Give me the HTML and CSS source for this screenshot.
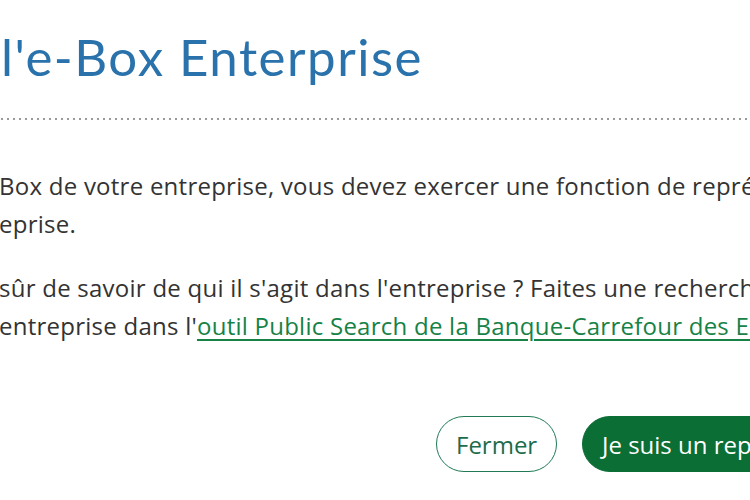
FILE: index.html
```html
<!DOCTYPE html>
<html lang="fr">
<head>
<meta charset="utf-8">
<title>l'e-Box Enterprise</title>
<link rel="stylesheet" href="styles.css">
</head>
<body>
<div class="modal">
  <header class="modal-header">
    <h1 class="modal-title">l'e-Box Enterprise</h1>
  </header>
  <div class="modal-body">
    <p class="para"><span class="line">Box de votre entreprise, vous devez exercer une fonction de représentation</span><span class="line">eprise.</span></p>
    <p class="para"><span class="line">sûr de savoir de qui il s'agit dans l'entreprise ? Faites une recherche</span><span class="line">entreprise dans l'<a class="link" href="#">outil Public Search de la Banque-Carrefour des Entreprises</a></span></p>
  </div>
  <footer class="modal-footer">
    <button class="btn btn-outline">Fermer</button>
    <button class="btn btn-primary">Je suis un représentant</button>
  </footer>
</div>
</body>
</html>
```
FILE: styles.css
```css
html, body {
  margin: 0;
  padding: 0;
  background: #ffffff;
  overflow: hidden;
}
body {
  width: 750px;
  height: 500px;
}
.modal {
  width: 900px;
  margin-left: -1px;
  font-family: "Open Sans", "Liberation Sans", sans-serif;
  color: #333333;
}
.modal-header {
  padding-top: 27px;
  height: 121px;
  box-sizing: border-box;
  background-image: linear-gradient(to right, #9a9a9a 1.6px, transparent 1.6px);
  background-size: 6px 1.6px;
  background-repeat: repeat-x;
  background-position: 2px 118px;
}
.modal-title {
  margin: 0 0 0 2px;
  font-family: "Lato", "Open Sans", sans-serif;
  font-weight: 400;
  font-size: 51px;
  line-height: 60px;
  color: #2a72ab;
  letter-spacing: 1.5px;
}
.modal-body {
  padding-top: 46px;
}
.para {
  margin: 0 0 26px 0;
  font-size: 24px;
  letter-spacing: 0.25px;
  line-height: 38px;
}
.line {
  display: block;
  white-space: nowrap;
}
.link {
  color: #168246;
  text-decoration: underline;
  text-decoration-thickness: 1.5px;
  text-underline-offset: 4px;
}
.modal-footer {
  display: flex;
  gap: 25px;
  padding-top: 45px;
  padding-left: 437px;
}
.btn {
  height: 56px;
  border-radius: 28px;
  font-family: "Open Sans", "Liberation Sans", sans-serif;
  font-size: 24px;
  padding: 0 19px;
  white-space: nowrap;
  cursor: pointer;
}
.btn-outline {
  background: #ffffff;
  border: 1.5px solid #1f7a55;
  color: #1b6c4c;
  width: 121px;
}
.btn-primary {
  background: #0a6e35;
  border: 1.5px solid #0a6e35;
  color: #ffffff;
}
```
